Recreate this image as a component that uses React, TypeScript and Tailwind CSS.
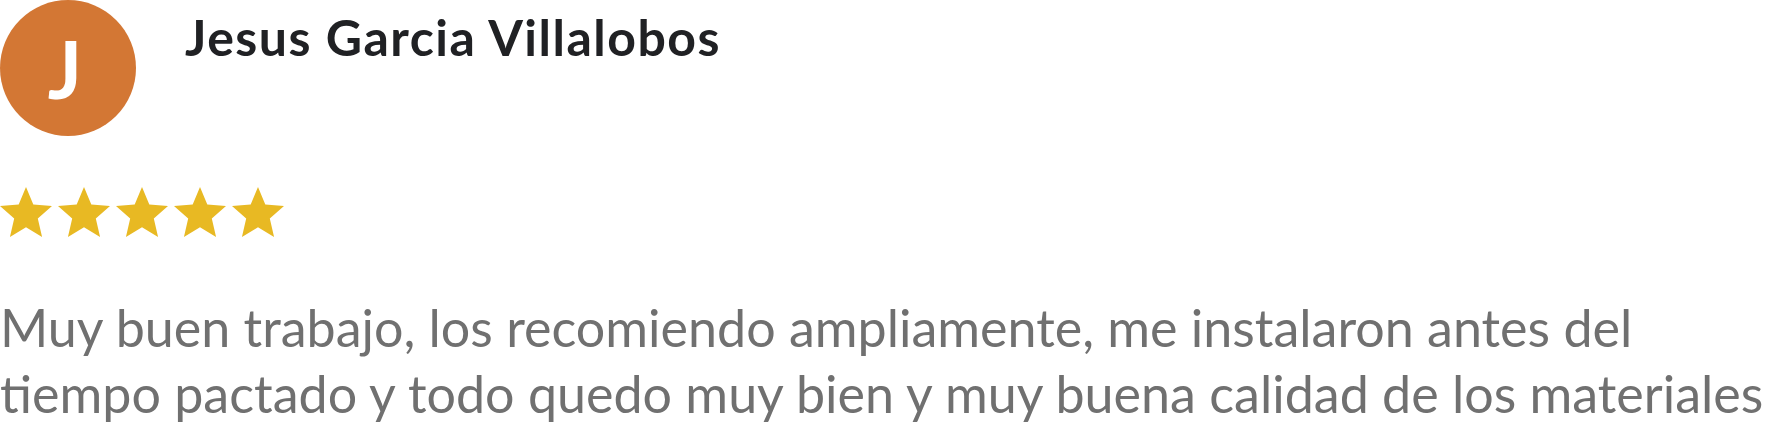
import React from "react";

const Star = () => (
  <svg width="52" height="50" viewBox="2 2 20 19" preserveAspectRatio="none" className="shrink-0">
    <polygon
      points="12,17.27 18.18,21 16.54,13.97 22,9.24 14.81,8.63 12,2 9.19,8.63 2,9.24 7.46,13.97 5.82,21"
      fill="#E8B923"
    />
  </svg>
);

export default function App() {
  return (
    <div
      className="w-[1780px] h-[427px] bg-white overflow-hidden flex flex-col"
      style={{ fontFamily: "Lato, 'Noto Sans', sans-serif" }}
    >
      <div className="flex items-start gap-[49px]">
        <div className="w-[136px] h-[136px] rounded-full bg-[#D37734] flex items-center justify-center shrink-0">
          <span className="text-white text-[80px] leading-none font-bold -ml-[6px]">J</span>
        </div>
        <div className="mt-[12px] text-[50px] leading-[50px] font-bold tracking-[1.5px] text-[#202124] whitespace-nowrap">
          Jesus Garcia Villalobos
        </div>
      </div>
      <div className="mt-[51px] flex gap-[6px]">
        <Star />
        <Star />
        <Star />
        <Star />
        <Star />
      </div>
      <div className="mt-[57px] text-[52px] leading-[66px] text-[#707070] whitespace-nowrap">
        Muy buen trabajo, los recomiendo ampliamente, me instalaron antes del
        <br />
        tiempo pactado y todo quedo muy bien y muy buena calidad de los materiales
      </div>
    </div>
  );
}
